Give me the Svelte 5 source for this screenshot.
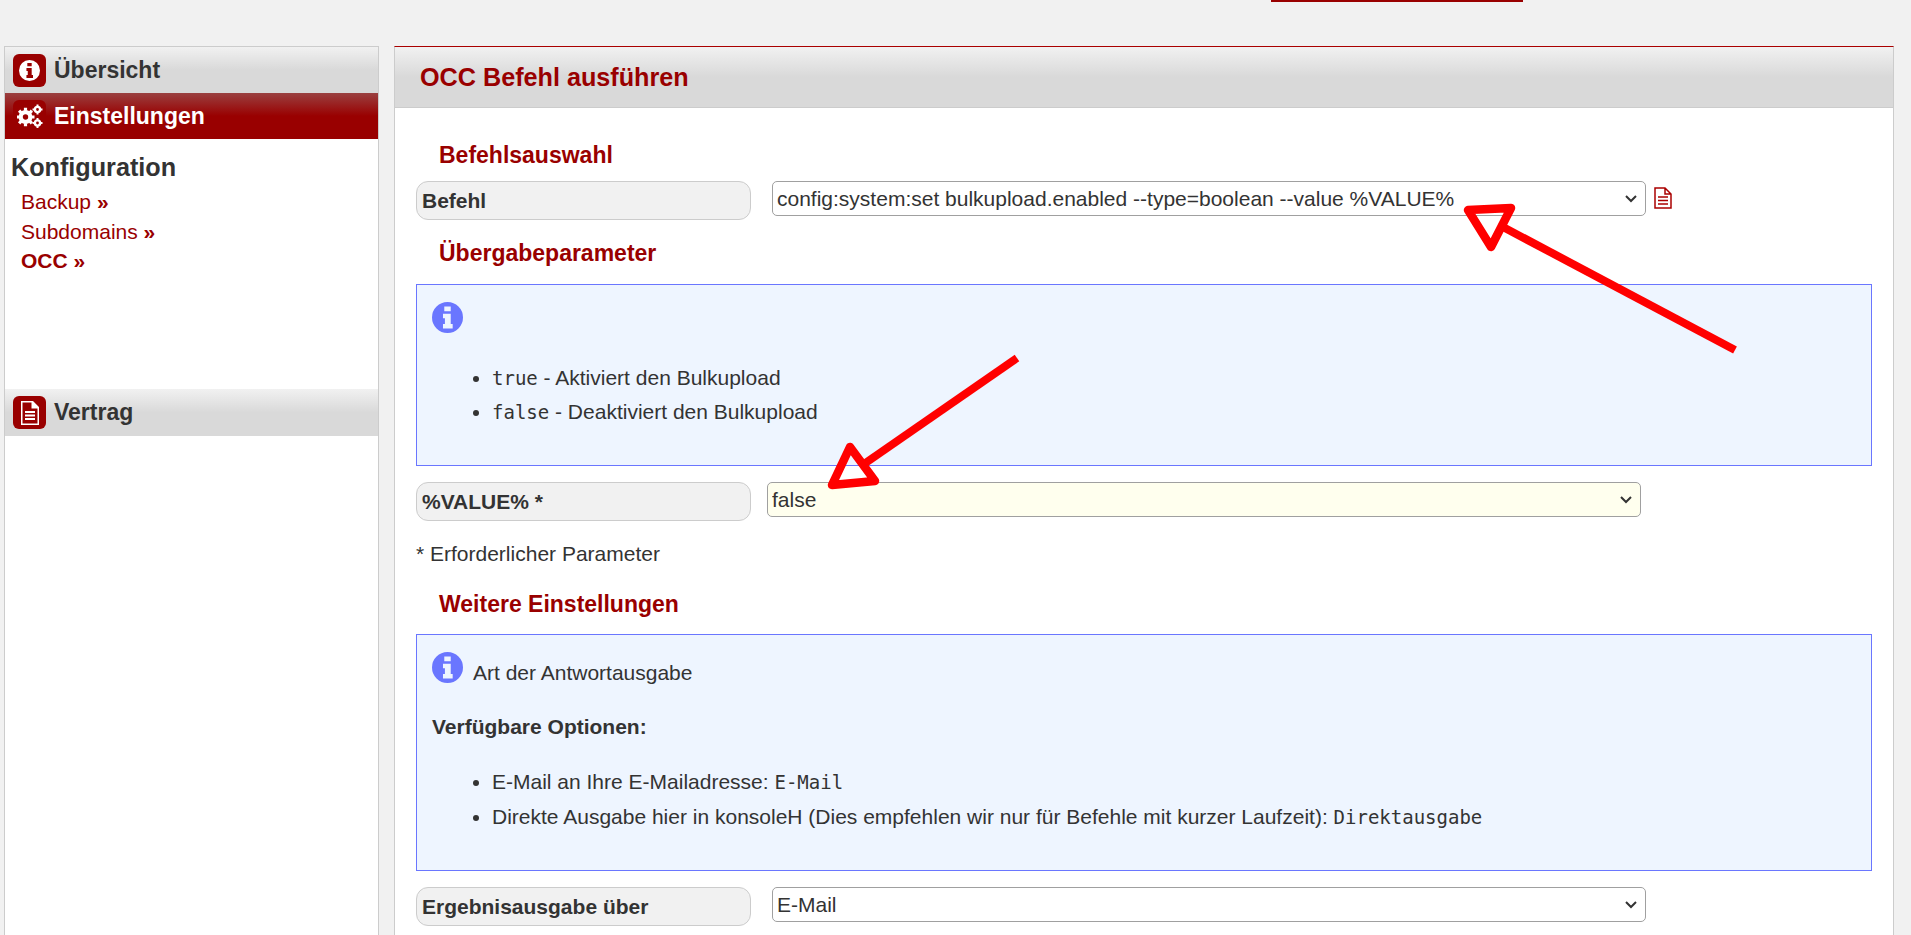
<script>
    const commandOptions = ['config:system:set bulkupload.enabled --type=boolean --value %VALUE%'];

    const valueHints = [
        { code: 'true', text: ' - Aktiviert den Bulkupload' },
        { code: 'false', text: ' - Deaktiviert den Bulkupload' }
    ];

    const infoPath = 'M12 0a12 12 0 1 0 0 24a12 12 0 0 0 0-24zM9.5 3.5h5v3.6h-5zM8.5 9h6v8h1.5v3.5H8.5V17h1.5v-4.5H8.500z';
</script>

<div class="page">
    <div class="topbar"><span class="tab"></span></div>

    <div class="columns">
        <aside class="sidebar">
            <div class="nav">
                <span class="badge">
                    <svg viewBox="0 0 24 24" width="21" height="21"><path fill="#fff" fill-rule="evenodd" d={infoPath} /></svg>
                </span>
                Übersicht
            </div>
            <div class="nav active">
                <span class="badge">
                    <svg viewBox="0 0 26 24" width="26" height="24">
                        <g fill="none" stroke="#fff">
                            <circle cx="8.500" cy="13" r="4.800" stroke-width="4.200" />
                            <path stroke-width="3.200" d="M8.500 3.800v3M8.500 19.200v3M-0.500 13h3M14.500 13h3M2.100 6.600l2.200 2.200M12.700 17.200l2.200 2.200M2.100 19.400l2.200-2.200M12.700 8.800l2.200-2.200" />
                            <circle cx="20.500" cy="5.500" r="2.600" stroke-width="2.400" />
                            <circle cx="20.500" cy="19" r="2.600" stroke-width="2.400" />
                            <path stroke-width="2" d="M20.500 0.500v2M20.500 8.500v2M15.500 5.500h2M23.500 5.500h2M20.500 14v2M20.500 22v2M15.500 19h2M23.500 19h2" />
                        </g>
                    </svg>
                </span>
                Einstellungen
            </div>

            <h3>Konfiguration</h3>
            <ul class="subnav">
                <li>Backup <b>»</b></li>
                <li>Subdomains <b>»</b></li>
                <li class="current">OCC »</li>
            </ul>

            <div class="nav contract">
                <span class="badge">
                    <svg viewBox="0 0 20 24" width="20" height="24">
                        <path fill="#fff" fill-rule="evenodd" d="M1 0h12l6 6v18H1zM2.500 1.500v21h15V7.500h-6v-6z" />
                        <path fill="#fff" d="M13 1.500v4.500h4.500z" />
                        <path fill="#fff" d="M5 10h10v2H5zM5 13.500h10v2H5zM5 17h10v2H5z" />
                    </svg>
                </span>
                Vertrag
            </div>
        </aside>

        <main class="content">
            <h1>OCC Befehl ausführen</h1>

            <div class="body">
                <h2>Befehlsauswahl</h2>
                <div class="row">
                    <div class="label">Befehl</div>
                    <select class="field">
                        {#each commandOptions as option}
                            <option>{option}</option>
                        {/each}
                    </select>
                    <svg class="doc" viewBox="0 0 18 22" width="18" height="22">
                        <path fill="none" stroke="#a00" stroke-width="1.500" d="M1 1h10l6 6v14H1zM11 1v6h6" />
                        <path stroke="#a00" stroke-width="1.400" d="M4 10h10M4 13.500h10M4 17h10" />
                    </svg>
                </div>

                <h2 class="second">Übergabeparameter</h2>
                <div class="info first-info">
                    <svg class="info-icon" viewBox="0 0 24 24" width="31" height="31"><path fill="#6a76ff" fill-rule="evenodd" d={infoPath} /></svg>
                    <ul>
                        {#each valueHints as hint}
                            <li><code>{hint.code}</code>{hint.text}</li>
                        {/each}
                    </ul>
                </div>

                <div class="row value-row">
                    <div class="label">%VALUE% *</div>
                    <select class="field required">
                        <option>false</option>
                        <option>true</option>
                    </select>
                </div>

                <p class="note">* Erforderlicher Parameter</p>

                <h2 class="third">Weitere Einstellungen</h2>
                <div class="info second-info">
                    <div class="info-head">
                        <svg class="info-icon" viewBox="0 0 24 24" width="31" height="31"><path fill="#6a76ff" fill-rule="evenodd" d={infoPath} /></svg>
                        <span>Art der Antwortausgabe</span>
                    </div>
                    <p class="options"><strong>Verfügbare Optionen:</strong></p>
                    <ul>
                        <li>E-Mail an Ihre E-Mailadresse: <code>E-Mail</code></li>
                        <li>Direkte Ausgabe hier in konsoleH (Dies empfehlen wir nur für Befehle mit kurzer Laufzeit): <code>Direktausgabe</code></li>
                    </ul>
                </div>

                <div class="row result-row">
                    <div class="label">Ergebnisausgabe über</div>
                    <select class="field">
                        <option>E-Mail</option>
                        <option>Direktausgabe</option>
                    </select>
                </div>
            </div>
        </main>
    </div>

    <!-- annotation arrows drawn over the screenshot -->
    <svg class="arrows" width="1911" height="935" viewBox="0 0 1911 935">
        <g fill="none" stroke="#ff0000" stroke-linejoin="round">
            <path stroke-width="8" d="M1735 350L1503 227" />
            <path stroke-width="8.500" d="M1468 210L1511 208L1491 247Z" />
            <path stroke-width="8" d="M1017 358L864 464" />
            <path stroke-width="8.500" d="M850 447L832 485L875 481Z" />
        </g>
    </svg>
</div>

<style>
    :global(body) {
        background: #f1f1f1;
        font-family: "Liberation Sans", Arial, sans-serif;
        color: #333;
        font-size: 21px;
    }
    .page {
        position: relative;
        height: 935px;
        overflow: hidden;
    }
    .topbar {
        height: 46px;
    }
    .tab {
        display: block;
        width: 252px;
        height: 2px;
        margin-left: 1271px;
        background: #990000;
    }
    .columns {
        display: flex;
        gap: 15px;
        padding-left: 4px;
        height: 889px;
    }
    .sidebar {
        width: 373px;
        background: #fff;
        border: 1px solid #ccc;
        border-bottom: 0;
    }
    .nav {
        display: flex;
        align-items: center;
        gap: 8px;
        height: 46px;
        padding-left: 8px;
        font-size: 23px;
        font-weight: bold;
        background: linear-gradient(#f1f1f1, #d9d9d9 50%);
    }
    .nav.active {
        color: #fff;
        background: linear-gradient(#9a4040, #990000 50%);
    }
    .contract {
        margin-top: 113.500px;
        height: 47px;
    }
    .badge {
        display: flex;
        align-items: center;
        justify-content: center;
        width: 33px;
        height: 33px;
        border-radius: 6px;
        background: #990000;
    }
    h3 {
        margin: 14px 0 0 6px;
        font-size: 25.200px;
        line-height: 28px;
    }
    .subnav {
        list-style: none;
        margin: 6px 0 0 16px;
        padding: 0;
        color: #990000;
    }
    .subnav li {
        height: 29.500px;
        line-height: 30px;
    }
    .current {
        font-weight: bold;
    }
    .content {
        width: 1498px;
        background: #fff;
        border: 1px solid #ccc;
        border-top: 1px solid #a00;
        border-bottom: 0;
    }
    h1 {
        margin: 0;
        height: 60px;
        padding-left: 25px;
        line-height: 60px;
        font-size: 25.200px;
        color: #990000;
        border-bottom: 1px solid #ccc;
        background: linear-gradient(#f1f1f1, #d9d9d9 50%);
    }
    .body {
        padding: 35px 0 0 21px;
    }
    h2 {
        margin: 0 0 13px 23px;
        font-size: 23px;
        line-height: 25px;
        color: #990000;
    }
    h2.second {
        margin-top: 21px;
        margin-bottom: 18px;
    }
    h2.third {
        margin-top: 26px;
        margin-bottom: 17px;
    }
    .row {
        display: flex;
        align-items: flex-start;
    }
    .label {
        box-sizing: border-box;
        width: 335px;
        height: 39px;
        padding-left: 5px;
        line-height: 38px;
        font-weight: bold;
        background: #f1f1f1;
        border: 1px solid #ccc;
        border-radius: 12px;
    }
    .field {
        appearance: none;
        box-sizing: border-box;
        width: 874px;
        height: 35px;
        margin-left: 21px;
        padding: 0 30px 0 4px;
        font-family: inherit;
        font-size: 21px;
        color: #333;
        background: #fff url("data:image/svg+xml,%3Csvg xmlns='http://www.w3.org/2000/svg' width='12' height='8'%3E%3Cpath fill='none' stroke='%23333' stroke-width='2' d='M1 1l5 5 5-5'/%3E%3C/svg%3E") no-repeat right 8px center;
        border: 1px solid #a0a0a0;
        border-radius: 5px;
    }
    .required {
        margin-left: 16px;
        background-color: #ffffee;
    }
    .doc {
        margin: 6px 0 0 8px;
    }
    .value-row {
        margin-top: 16px;
    }
    .result-row {
        margin-top: 16px;
    }
    .note {
        margin: 21px 0 0;
        line-height: 24px;
    }
    .info {
        box-sizing: border-box;
        width: 1456px;
        padding: 17px 15px 0;
        background: #eef5ff;
        border: 1px solid #6a76ff;
    }
    .first-info {
        height: 182px;
    }
    .second-info {
        height: 237px;
    }
    .info-icon {
        display: block;
    }
    .info ul {
        margin: 0;
        padding-left: 60px;
    }
    .info li {
        height: 34.500px;
        line-height: 34px;
    }
    .first-info ul {
        margin-top: 28px;
    }
    .first-info li {
        height: 34px;
    }
    .info-head {
        display: flex;
        gap: 10px;
    }
    .info-head span {
        padding-top: 9px;
    }
    .options {
        margin: 30px 0 0;
        line-height: 24px;
    }
    .second-info ul {
        margin-top: 26px;
    }
    code {
        font-family: "DejaVu Sans Mono", monospace;
        font-size: 19px;
    }
    .arrows {
        position: absolute;
        top: 0;
        left: 0;
        pointer-events: none;
    }
</style>
